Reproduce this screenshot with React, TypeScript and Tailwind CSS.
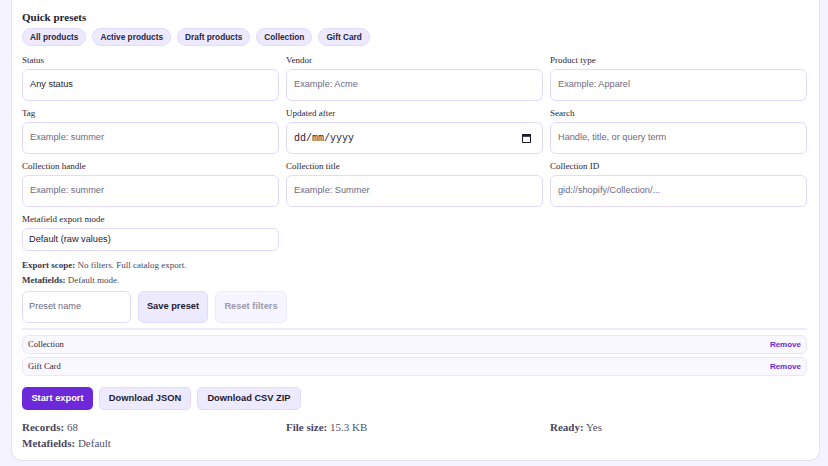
import React from 'react';

const SERIF = "font-['Liberation_Serif','Times_New_Roman',serif]";
const SANS = "font-['Liberation_Sans',Arial,sans-serif]";

const PRESETS = ['All products', 'Active products', 'Draft products', 'Collection', 'Gift Card'];

const FIELDS = [
  { label: 'Status', value: 'Any status' },
  { label: 'Vendor', placeholder: 'Example: Acme' },
  { label: 'Product type', placeholder: 'Example: Apparel' },
  { label: 'Tag', placeholder: 'Example: summer' },
  { label: 'Updated after', date: true },
  { label: 'Search', placeholder: 'Handle, title, or query term' },
  { label: 'Collection handle', placeholder: 'Example: summer' },
  { label: 'Collection title', placeholder: 'Example: Summer' },
  { label: 'Collection ID', placeholder: 'gid://shopify/Collection/...' },
];

const SAVED = ['Collection', 'Gift Card'];

const CalendarIcon = () => (
  <svg width="9" height="9" viewBox="0 0 9 9" className="shrink-0">
    <rect x="0.5" y="0.5" width="8" height="8" rx="0.6" fill="none" stroke="#1f1b2e" strokeWidth="1.1" />
    <rect x="0.5" y="0.5" width="8" height="2.3" fill="#1f1b2e" />
  </svg>
);

export default function App() {
  return (
    <div className="min-h-[466px] bg-[#f5f3ff] pb-[7px]">
      <div className={`ml-[11px] mr-[8px] bg-white border border-t-0 border-[#e6e0fa] rounded-b-[10px] pl-[10px] pr-[12px] pt-[9px] pb-[10px] text-[#1f1b2e] ${SERIF}`}>
        <h2 className="text-[11px] leading-[16px] font-bold">Quick presets</h2>

        {/* ── presets ── */}
        <div className="mt-[3px] flex gap-[6px]">
          {PRESETS.map(p => (
            <button
              key={p}
              className={`h-[18px] px-[7px] rounded-full bg-[#ede9fe] border border-[#e2dafc] text-[8.3px] font-bold text-[#2a2540] ${SANS}`}
            >
              {p}
            </button>
          ))}
        </div>

        {/* ── filter grid ── */}
        <div className="mt-[9px] grid grid-cols-3 gap-x-[7px] gap-y-[7px]">
          {FIELDS.map(f => (
            <div key={f.label}>
              <div className="text-[9px] leading-[11px] mb-[3px] text-[#2a2638]">{f.label}</div>
              <div className={`h-[32px] rounded-[6px] border border-[#e2dafc] bg-white px-[7px] flex items-center text-[9.2px] ${SANS}`}>
                {f.date ? (
                  <div className="flex w-full items-center justify-between pr-[4px]">
                    <span className="font-['Liberation_Mono','DejaVu_Sans_Mono',monospace] text-[10px] text-[#1f1b2e]">dd/mm/yyyy</span>
                    <CalendarIcon />
                  </div>
                ) : f.value ? (
                  <span className="text-[#1f1b2e]">{f.value}</span>
                ) : (
                  <span className="text-[#6e6a80]">{f.placeholder}</span>
                )}
              </div>
            </div>
          ))}
          <div>
            <div className="text-[9px] leading-[11px] mb-[3px] text-[#2a2638]">Metafield export mode</div>
            <div className={`h-[23px] rounded-[6px] border border-[#e2dafc] bg-white px-[6px] flex items-center text-[9.2px] text-[#1f1b2e] ${SANS}`}>
              Default (raw values)
            </div>
          </div>
        </div>

        {/* ── scope notes ── */}
        <p className="mt-[9px] text-[9px] leading-[11px] text-[#4a4658]">
          <b className="text-[#3a3648]">Export scope:</b> No filters. Full catalog export.
        </p>
        <p className="mt-[4px] text-[9px] leading-[11px] text-[#4a4658]">
          <b className="text-[#3a3648]">Metafields:</b> Default mode.
        </p>

        {/* ── preset save row ── */}
        <div className={`mt-[5px] flex gap-[7px] ${SANS}`}>
          <div className="w-[109px] h-[32px] rounded-[6px] border border-[#e2dafc] px-[6px] flex items-center text-[9.2px] text-[#6e6a80]">
            Preset name
          </div>
          <button className="w-[70px] h-[32px] rounded-[6px] border border-[#e2dafc] bg-[#ede9fe] text-[9.3px] font-bold text-[#1f1b2e]">
            Save preset
          </button>
          <button className="w-[72px] h-[32px] rounded-[6px] border border-[#eeeafd] bg-[#f7f5ff] text-[9.3px] font-bold text-[#9d99ad]">
            Reset filters
          </button>
        </div>

        <div className="mt-[5px] h-[2px] bg-[#efebfd]" />

        {/* ── saved presets ── */}
        <div className="mt-[5px] flex flex-col gap-[3px]">
          {SAVED.map(s => (
            <div key={s} className="h-[19px] rounded-[6px] border border-[#ece6fd] bg-[#faf8ff] pl-[5px] pr-[5px] flex items-center justify-between">
              <span className="text-[8.6px] text-[#2a2638]">{s}</span>
              <span className={`text-[8px] font-bold text-[#6d28d9] ${SANS}`}>Remove</span>
            </div>
          ))}
        </div>

        {/* ── actions ── */}
        <div className={`mt-[11px] flex gap-[6px] ${SANS}`}>
          <button className="w-[71px] h-[23px] rounded-[5px] bg-[#6d28d9] text-white text-[9.3px] font-bold">
            Start export
          </button>
          <button className="w-[92px] h-[23px] rounded-[5px] border border-[#e2dafc] bg-[#ede9fe] text-[9.3px] font-bold text-[#1f1b2e]">
            Download JSON
          </button>
          <button className="w-[104px] h-[23px] rounded-[5px] border border-[#e2dafc] bg-[#ede9fe] text-[9.3px] font-bold text-[#1f1b2e]">
            Download CSV ZIP
          </button>
        </div>

        {/* ── stats ── */}
        <div className="mt-[10px] grid grid-cols-3 gap-x-[7px] gap-y-[2px] text-[11px] leading-[14px] text-[#55516a]">
          <div><b className="text-[#4a4660]">Records:</b> 68</div>
          <div><b className="text-[#4a4660]">File size:</b> 15.3 KB</div>
          <div><b className="text-[#4a4660]">Ready:</b> Yes</div>
          <div><b className="text-[#4a4660]">Metafields:</b> Default</div>
        </div>
      </div>
    </div>
  );
}
